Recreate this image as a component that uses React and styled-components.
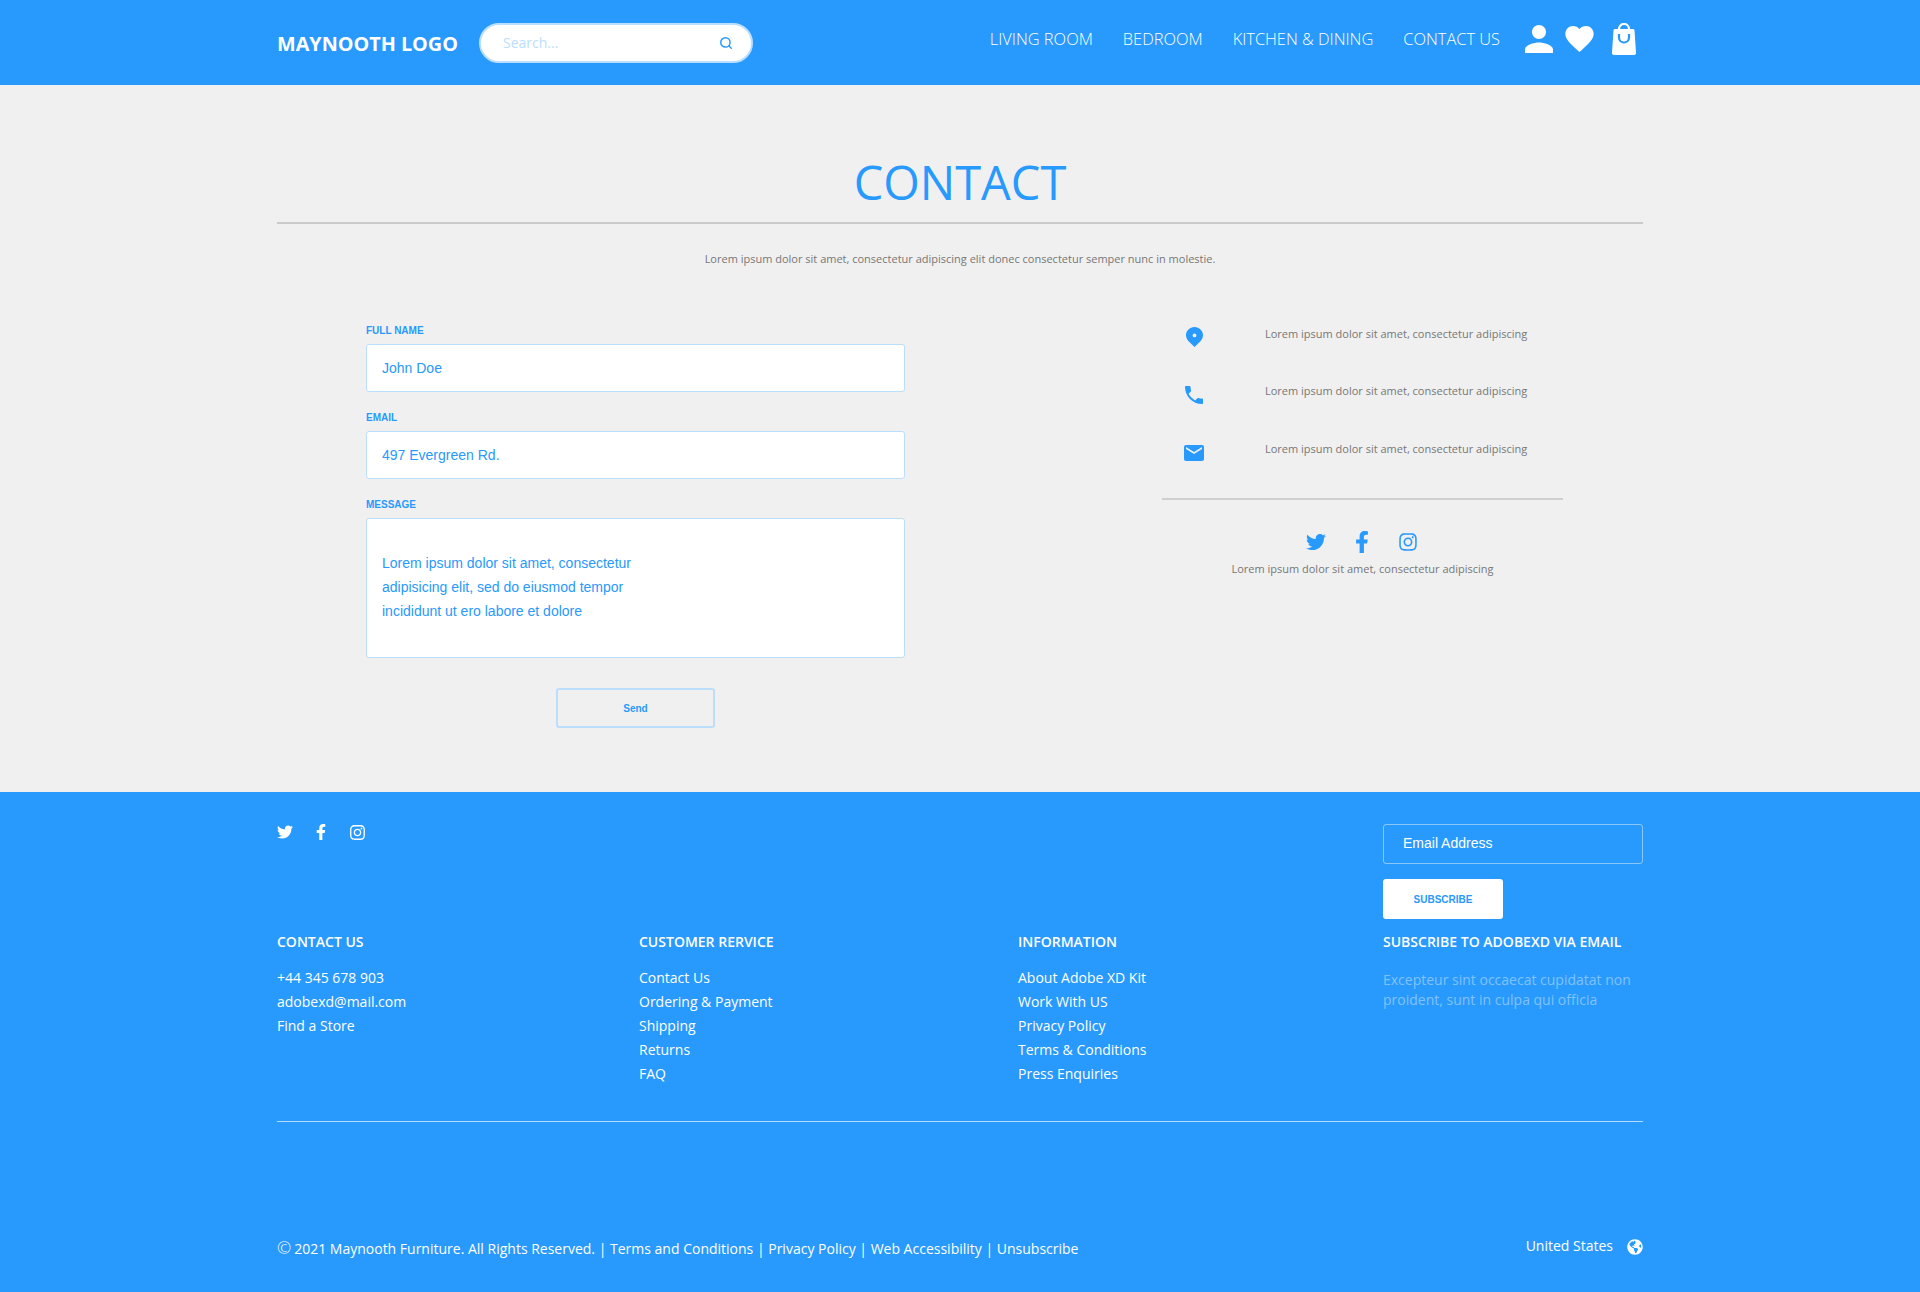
import React from 'react';
import styled, { createGlobalStyle } from 'styled-components';
import { MdEmail, MdLocalPhone } from 'react-icons/md';
import { FaFacebookF, FaGlobeAmericas, FaInstagram, FaTwitter } from 'react-icons/fa';
import { FiSearch } from 'react-icons/fi';

const BLUE = '#2899fd';
const PALE = '#bbdefd';

const GlobalStyle = createGlobalStyle`
  html, body { margin: 0; padding: 0; background: #f0f0f0; }
  * { box-sizing: border-box; }
  body { font-family: "Open Sans", "Liberation Sans", sans-serif; }
`;

const Container = styled.div`
  width: 1366px;
  margin: 0 auto;
`;

const Header = styled.header`
  background: ${BLUE};
  height: 85px;
`;

const HeaderRow = styled(Container)`
  display: flex;
  align-items: center;
  height: 100%;
`;

const Logo = styled.div`
  font-size: 19.8px;
  font-weight: 700;
  line-height: 26px;
  padding-top: 2px;
  color: #fff;
  width: 202px;
`;

const Search = styled.div`
  display: flex;
  align-items: center;
  width: 274px;
  height: 40px;
  padding: 0 18px 0 22px;
  background: #fff;
  border: 2px solid ${PALE};
  border-radius: 20px;
  color: ${BLUE};
`;

const SearchInput = styled.input`
  flex: 1;
  min-width: 0;
  border: 0;
  outline: 0;
  padding: 0;
  background: none;
  font: 14px "Open Sans", sans-serif;
  &::placeholder { color: ${PALE}; opacity: 1; }
`;

const Nav = styled.nav`
  display: flex;
  gap: 30px;
  margin-left: auto;
  margin-bottom: 8px;
`;

const NavLink = styled.a`
  font-size: 16.4px;
  font-weight: 300;
  line-height: 22px;
  color: #fff;
`;

const UserIcons = styled.div`
  display: flex;
  align-items: center;
  margin: 0 7px 8px 25px;
  color: #fff;
`;

const IconSvg = styled.svg`
  display: block;
  fill: currentColor;
  margin-left: ${(p) => p.$gap || 0}px;
`;

const Main = styled.main`
  height: 707px;
  padding-top: 65px;
`;

const Title = styled.h1`
  margin: 0;
  font-size: 47px;
  font-weight: 400;
  line-height: 65px;
  text-align: center;
  color: ${BLUE};
  padding-bottom: 7px;
  border-bottom: 2px solid #cacaca;
`;

const Intro = styled.p`
  margin: 27px 0 0;
  font-size: 11px;
  line-height: 15px;
  text-align: center;
  color: #777;
`;

const Columns = styled.div`
  display: flex;
  margin-top: 58px;
  padding-left: 89px;
`;

const Form = styled.form`
  width: 539px;
  display: flex;
  flex-direction: column;
`;

const Label = styled.label`
  display: block;
  margin-bottom: 6px;
  font: bold 10px/14px "Liberation Sans", sans-serif;
  color: ${BLUE};
`;

const Input = styled.input`
  display: block;
  width: 100%;
  height: 48px;
  margin-bottom: 19px;
  padding: 0 15px;
  background: #fff;
  border: 1px solid ${PALE};
  border-radius: 3px;
  outline: 0;
  font: 14px "Liberation Sans", sans-serif;
  color: ${BLUE};
`;

const TextArea = styled.textarea`
  display: block;
  width: 100%;
  height: 140px;
  padding: 32px 15px 0;
  background: #fff;
  border: 1px solid ${PALE};
  border-radius: 3px;
  outline: 0;
  resize: none;
  overflow: hidden;
  font: 14px/24px "Liberation Sans", sans-serif;
  color: ${BLUE};
`;

const SendButton = styled.button`
  align-self: center;
  width: 159px;
  height: 40px;
  margin-top: 30px;
  background: none;
  border: 2px solid ${PALE};
  border-radius: 3px;
  font: bold 10px "Liberation Sans", sans-serif;
  color: ${BLUE};
`;

const Info = styled.aside`
  width: 401px;
  margin-left: 257px;
`;

const InfoRow = styled.div`
  display: grid;
  grid-template-columns: 103px 1fr;
  height: 57.5px;
`;

const InfoIcon = styled.div`
  display: flex;
  justify-content: center;
  width: 24px;
  height: 24px;
  margin: ${(p) => p.$top}px 0 0 20px;
  color: ${BLUE};
`;

const InfoText = styled.p`
  margin: 1.8px 0 0;
  font-size: 11px;
  line-height: 15px;
  color: #777;
`;

const InfoDivider = styled.hr`
  margin: 1px 0 0;
  border: 0;
  border-top: 2px solid #cfcfcf;
`;

const SocialRow = styled.div`
  display: flex;
  align-items: center;
  justify-content: ${(p) => (p.$center ? 'center' : 'flex-start')};
  gap: ${(p) => p.$gap}px;
  height: ${(p) => p.$height}px;
  color: ${(p) => p.$color};
`;

const CenterSocial = styled(SocialRow)`
  margin-top: 30px;
  padding-right: 2px;
`;

const SocialText = styled(InfoText)`
  margin: 7px 0 0;
  text-align: center;
`;

const Footer = styled.footer`
  background: ${BLUE};
  height: 500px;
  padding-top: 32px;
  color: #fff;
`;

const FooterTop = styled.div`
  display: flex;
  justify-content: space-between;
  align-items: flex-start;
`;

const Subscribe = styled.div`
  width: 260px;
`;

const EmailInput = styled.input`
  display: block;
  width: 100%;
  height: 40px;
  padding: 0 19px 2px;
  background: none;
  border: 1px solid rgba(255, 255, 255, 0.45);
  border-radius: 3px;
  outline: 0;
  font: 14px "Liberation Sans", sans-serif;
  color: #fff;
  &::placeholder { color: #fff; opacity: 1; }
`;

const SubscribeButton = styled.button`
  display: block;
  width: 120px;
  height: 40px;
  margin-top: 15px;
  background: #fff;
  border: 0;
  border-radius: 3px;
  font: bold 10px "Liberation Sans", sans-serif;
  color: ${BLUE};
`;

const LinkColumns = styled.div`
  display: grid;
  grid-template-columns: 362px 379px 365px 1fr;
  margin-top: 13px;
`;

const ColumnTitle = styled.h4`
  margin: 0 0 14px;
  font-size: 14px;
  font-weight: 600;
  line-height: 20px;
`;

const FooterLink = styled.a`
  display: block;
  font-size: 14px;
  line-height: 24px;
`;

const FooterNote = styled.p`
  margin: 0;
  padding-top: 4px;
  font-size: 14px;
  line-height: 20px;
  color: rgba(255, 255, 255, 0.42);
`;

const FooterDivider = styled.hr`
  margin: 35px 0 0;
  border: 0;
  border-top: 1px solid rgba(255, 255, 255, 0.65);
`;

const Legal = styled.div`
  display: flex;
  justify-content: space-between;
  align-items: flex-start;
  margin-top: 116px;
  font-size: 14px;
  line-height: 20px;
`;

const Copy = styled.span`
  font-size: 17px;
  font-weight: 300;
  line-height: 20px;
  margin-right: 3px;
`;

const Region = styled.div`
  display: flex;
  align-items: center;
  gap: 14px;
  margin-top: -2px;
  svg { margin-top: 2px; }
`;

const Pin = () => (
  <svg width="17" height="20" viewBox="0 0 17 20">
    <path
      fill="currentColor"
      fillRule="evenodd"
      d="M8.5 0C13.2 0 17 3.7 17 8.3c0 2.2-.9 4-2.3 5.6L8.5 20l-6.2-6.1C.9 12.3 0 10.5 0 8.3 0 3.7 3.8 0 8.5 0zm0 6.5a1.9 1.9 0 1 0 0 3.8 1.9 1.9 0 0 0 0-3.8z"
    />
  </svg>
);

const Person = () => (
  <IconSvg width="28" height="28" viewBox="4 4 16 16">
    <path d="M12 12c2.21 0 4-1.79 4-4s-1.79-4-4-4-4 1.79-4 4 1.79 4 4 4zm0 2c-2.67 0-8 1.34-8 4v2h16v-2c0-2.66-5.33-4-8-4z" />
  </IconSvg>
);

const Heart = () => (
  <IconSvg $gap={12} width="29" height="26" viewBox="2 3 20 18.35">
    <path d="M12 21.35l-1.45-1.32C5.4 15.36 2 12.28 2 8.5 2 5.42 4.42 3 7.5 3c1.74 0 3.41.81 4.5 2.09C13.09 3.81 14.76 3 16.5 3 19.58 3 22 5.42 22 8.5c0 3.78-3.4 6.86-8.55 11.54L12 21.35z" />
  </IconSvg>
);

const Bag = () => (
  <IconSvg $gap={18} width="24" height="32" viewBox="0 0 24 32">
    <path d="M3 6h18a1.5 1.5 0 0 1 1.5 1.4L24 29.5a2 2 0 0 1-2 2.5H2a2 2 0 0 1-2-2.5L1.5 7.4A1.5 1.5 0 0 1 3 6z" />
    <path d="M7 8V6a5 5 0 0 1 10 0v2" fill="none" stroke="currentColor" strokeWidth="2.2" />
    <path d="M7 11v3.5a5 5 0 0 0 10 0V11" fill="none" stroke={BLUE} strokeWidth="2.2" />
  </IconSvg>
);

const contactColumn = ['+44 345 678 903', 'adobexd@mail.com', 'Find a Store'];
const serviceColumn = ['Contact Us', 'Ordering & Payment', 'Shipping', 'Returns', 'FAQ'];
const infoColumn = ['About Adobe XD Kit', 'Work With US', 'Privacy Policy', 'Terms & Conditions', 'Press Enquiries'];
const lorem = 'Lorem ipsum dolor sit amet, consectetur adipiscing';

const App = () => (
  <>
    <GlobalStyle />
    <Header>
      <HeaderRow>
        <Logo>MAYNOOTH LOGO</Logo>
        <Search>
          <SearchInput placeholder="Search..." />
          <FiSearch size={14} strokeWidth={2.5} />
        </Search>
        <Nav>
          <NavLink>LIVING ROOM</NavLink>
          <NavLink>BEDROOM</NavLink>
          <NavLink>KITCHEN &amp; DINING</NavLink>
          <NavLink>CONTACT US</NavLink>
        </Nav>
        <UserIcons>
          <Person />
          <Heart />
          <Bag />
        </UserIcons>
      </HeaderRow>
    </Header>

    <Main>
      <Container>
        <Title>CONTACT</Title>
        <Intro>Lorem ipsum dolor sit amet, consectetur adipiscing elit donec consectetur semper nunc in molestie.</Intro>
        <Columns>
          <Form>
            <Label>FULL NAME</Label>
            <Input defaultValue="John Doe" />
            <Label>EMAIL</Label>
            <Input defaultValue="497 Evergreen Rd." />
            <Label>MESSAGE</Label>
            <TextArea
              defaultValue={'Lorem ipsum dolor sit amet, consectetur\nadipisicing elit, sed do eiusmod tempor\nincididunt ut ero labore et dolore'}
            />
            <SendButton type="button">Send</SendButton>
          </Form>
          <Info>
            <InfoRow>
              <InfoIcon $top={3}><Pin /></InfoIcon>
              <InfoText>{lorem}</InfoText>
            </InfoRow>
            <InfoRow>
              <InfoIcon $top={1.8}><MdLocalPhone size={24} /></InfoIcon>
              <InfoText>{lorem}</InfoText>
            </InfoRow>
            <InfoRow>
              <InfoIcon $top={1.8}><MdEmail size={24} /></InfoIcon>
              <InfoText>{lorem}</InfoText>
            </InfoRow>
            <InfoDivider />
            <CenterSocial $center $gap={25} $height={24} $color={BLUE}>
              <FaTwitter size={20} />
              <FaFacebookF size={22} />
              <FaInstagram size={20} />
            </CenterSocial>
            <SocialText>{lorem}</SocialText>
          </Info>
        </Columns>
      </Container>
    </Main>

    <Footer>
      <Container>
        <FooterTop>
          <SocialRow $gap={20} $height={16} $color="#fff">
            <FaTwitter size={16} />
            <FaFacebookF size={16} />
            <FaInstagram size={17} />
          </SocialRow>
          <Subscribe>
            <EmailInput placeholder="Email Address" />
            <SubscribeButton type="button">SUBSCRIBE</SubscribeButton>
          </Subscribe>
        </FooterTop>
        <LinkColumns>
          <div>
            <ColumnTitle>CONTACT US</ColumnTitle>
            {contactColumn.map((t) => <FooterLink key={t}>{t}</FooterLink>)}
          </div>
          <div>
            <ColumnTitle>CUSTOMER RERVICE</ColumnTitle>
            {serviceColumn.map((t) => <FooterLink key={t}>{t}</FooterLink>)}
          </div>
          <div>
            <ColumnTitle>INFORMATION</ColumnTitle>
            {infoColumn.map((t) => <FooterLink key={t}>{t}</FooterLink>)}
          </div>
          <div>
            <ColumnTitle>SUBSCRIBE TO ADOBEXD VIA EMAIL</ColumnTitle>
            <FooterNote>Excepteur sint occaecat cupidatat non proident, sunt in culpa qui officia</FooterNote>
          </div>
        </LinkColumns>
        <FooterDivider />
        <Legal>
          <div>
            <Copy>©</Copy>
            2021 Maynooth Furniture. All Rights Reserved. | Terms and Conditions | Privacy Policy | Web Accessibility | Unsubscribe
          </div>
          <Region>
            United States
            <FaGlobeAmericas size={16} />
          </Region>
        </Legal>
      </Container>
    </Footer>
  </>
);

export default App;
